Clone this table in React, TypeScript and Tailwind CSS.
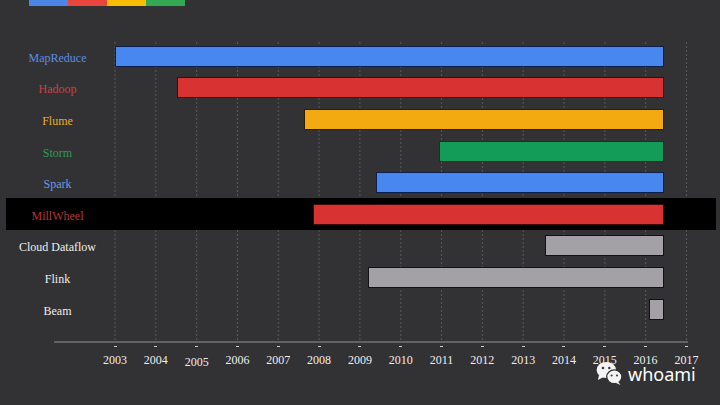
import React from "react";

const PX_PER_YEAR = 40.82;
const FIRST_YEAR = 2003;
const END = 2016.456;

type Row = {
  name: string;
  start: number;
  label: string;
  fill: string;
  border: string;
  highlight?: boolean;
};

const rows: Row[] = [
  { name: "MapReduce", start: 2003.0, label: "text-[#5d8ee0]", fill: "bg-[#4886f0]", border: "border-[#0b1f4a]" },
  { name: "Hadoop", start: 2004.52, label: "text-[#c94444]", fill: "bg-[#d83232]", border: "border-[#3b0c0c]" },
  { name: "Flume", start: 2007.64, label: "text-[#e6ae2e]", fill: "bg-[#f3aa11]", border: "border-[#2a1f05]" },
  { name: "Storm", start: 2010.94, label: "text-[#2f9a5c]", fill: "bg-[#139c57]", border: "border-[#0a3a20]" },
  { name: "Spark", start: 2009.4, label: "text-[#6b9ae3]", fill: "bg-[#4886f0]", border: "border-[#0b1f4a]" },
  { name: "MillWheel", start: 2007.84, label: "text-[#b83535]", fill: "bg-[#d83232]", border: "border-[#3b0c0c]", highlight: true },
  { name: "Cloud Dataflow", start: 2013.53, label: "text-[#eeeeee]", fill: "bg-[#a3a1a5]", border: "border-[#111111]" },
  { name: "Flink", start: 2009.2, label: "text-[#eeeeee]", fill: "bg-[#a3a1a5]", border: "border-[#111111]" },
  { name: "Beam", start: 2016.08, label: "text-[#eeeeee]", fill: "bg-[#a3a1a5]", border: "border-[#111111]" },
];

const years = Array.from({ length: 15 }, (_, i) => FIRST_YEAR + i);

function yearX(y: number) {
  return 115 + (y - FIRST_YEAR) * PX_PER_YEAR;
}

function WeChatIcon() {
  return (
    <svg width="27" height="25" viewBox="0 0 27 25">
      <ellipse cx="10.3" cy="9" rx="9.7" ry="8" fill="#f4f4f4" />
      <path d="M3 14 L2 19 L7.5 16 Z" fill="#f4f4f4" />
      <circle cx="7" cy="7" r="1.3" fill="#3a393c" />
      <circle cx="13.3" cy="7" r="1.3" fill="#3a393c" />
      <ellipse cx="18.3" cy="15.8" rx="7.6" ry="6.9" fill="#f4f4f4" stroke="#323133" strokeWidth="1.3" />
      <path d="M22 20.5 L24.5 24 L19.5 21.8 Z" fill="#f4f4f4" />
      <circle cx="15.6" cy="14.5" r="1.05" fill="#3a393c" />
      <circle cx="21" cy="14.5" r="1.05" fill="#3a393c" />
    </svg>
  );
}

export default function App() {
  return (
    <div
      className="relative w-[720px] h-[405px] overflow-hidden bg-[#323133] flex flex-col"
      style={{ fontFamily: '"Liberation Serif", "Times New Roman", serif' }}
    >
      {/* grid lines */}
      <svg className="absolute left-0 top-0" width="720" height="405">
        {years.map((y) => (
          <line
            key={y}
            x1={yearX(y)}
            x2={yearX(y)}
            y1={42}
            y2={341}
            stroke="#59585b"
            strokeWidth="1"
            strokeDasharray="2 2"
          />
        ))}
      </svg>

      {/* colour strip */}
      <div className="relative flex ml-[29px] h-[6px]">
        <div className="w-[39px] bg-[#4a86e8]" />
        <div className="w-[39px] bg-[#e8453c]" />
        <div className="w-[39px] bg-[#fbbc04]" />
        <div className="w-[39px] bg-[#34a853]" />
      </div>

      <div className="relative mt-[34.5px] flex flex-col">
        {rows.map((r) => (
          <div
            key={r.name}
            className={`flex items-center ml-[6px] w-[710px] h-[31.6px] ${r.highlight ? "bg-black" : ""}`}
          >
            <div className={`w-[103px] text-center text-[12px] leading-[14px] pt-[3px] ${r.label}`}>
              {r.name}
            </div>
            <div className="w-[6px]" />
            <div className="flex">
              <div
                className={`h-[21px] border ${r.fill} ${r.border}`}
                style={{
                  marginLeft: (r.start - FIRST_YEAR) * PX_PER_YEAR,
                  width: (END - r.start) * PX_PER_YEAR,
                }}
              />
            </div>
          </div>
        ))}
      </div>

      {/* axis */}
      <div className="relative mt-[16px] ml-[54px] w-[634px] h-[2px] bg-[#626164]" />
      <div className="relative flex ml-[94.6px] mt-[3px]">
        {years.map((y) => (
          <div key={y} className="w-[40.82px] flex flex-col items-center">
            <div className="w-[3px] h-[1px] bg-[#d0d0d0]" />
            <div
              className={`mt-[6px] text-[12px] leading-[14px] text-[#eeeeee] ${y === 2005 ? "pt-[2px]" : ""}`}
            >
              {y}
            </div>
          </div>
        ))}
      </div>

      {/* watermark */}
      <div className="absolute left-[596px] top-[361px]">
        <WeChatIcon />
      </div>
      <div
        className="absolute left-[628px] top-[365px] text-[18px] leading-[18px] text-white"
        style={{ fontFamily: '"Noto Sans", "Open Sans", sans-serif' }}
      >
        whoami
      </div>
    </div>
  );
}
